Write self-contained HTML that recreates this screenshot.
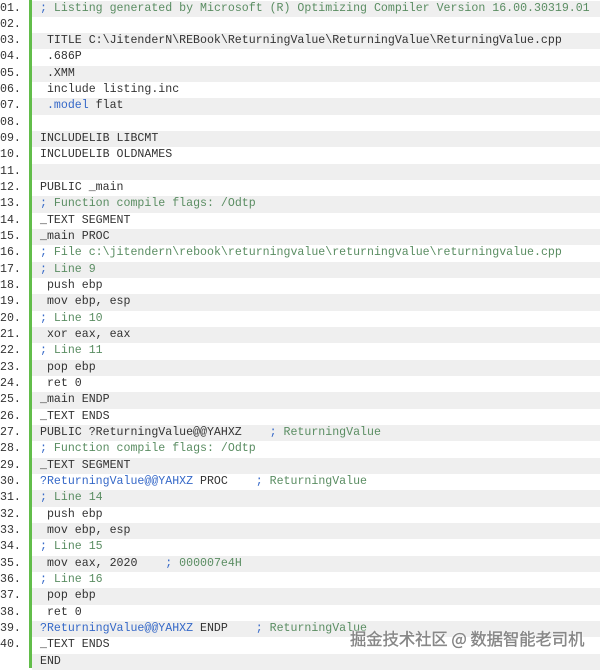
<!DOCTYPE html>
<html><head><meta charset="utf-8"><style>
body{margin:0;width:600px;height:668px;overflow:hidden;background:#fff;font-family:"Liberation Mono",monospace;font-size:11.6px;position:relative}
.nums{position:absolute;left:0;top:0.5px;width:29px;color:#333}
.bar{position:absolute;left:29px;top:0;width:2.5px;height:668px;background:#62bd4a}
.code{position:absolute;left:32px;top:0.5px;right:0;color:#333}
.r{height:16.33px;line-height:16.33px;white-space:pre}
.code .r{padding-left:8px}
.code .r:nth-child(odd){background:#efefef}
.c{color:#5a8d62}.s{color:#3568c8}.b{color:#3568c8}
.wm{position:absolute;left:350px;top:626px;font-family:"Noto Sans CJK SC",sans-serif;font-size:16.3px;color:#8a8a8a;white-space:nowrap;-webkit-text-stroke:0.3px #777;text-shadow:0 0 2px #fff,0 0 2px #fff}
</style></head><body>
<div class="nums">
<div class="r">01.</div><div class="r">02.</div><div class="r">03.</div><div class="r">04.</div><div class="r">05.</div><div class="r">06.</div><div class="r">07.</div><div class="r">08.</div><div class="r">09.</div><div class="r">10.</div><div class="r">11.</div><div class="r">12.</div><div class="r">13.</div><div class="r">14.</div><div class="r">15.</div><div class="r">16.</div><div class="r">17.</div><div class="r">18.</div><div class="r">19.</div><div class="r">20.</div><div class="r">21.</div><div class="r">22.</div><div class="r">23.</div><div class="r">24.</div><div class="r">25.</div><div class="r">26.</div><div class="r">27.</div><div class="r">28.</div><div class="r">29.</div><div class="r">30.</div><div class="r">31.</div><div class="r">32.</div><div class="r">33.</div><div class="r">34.</div><div class="r">35.</div><div class="r">36.</div><div class="r">37.</div><div class="r">38.</div><div class="r">39.</div><div class="r">40.</div>
</div>
<div class="bar"></div>
<div class="code">
<div class="r"><span class="s">;</span><span class="c"> Listing generated by Microsoft (R) Optimizing Compiler Version 16.00.30319.01</span></div>
<div class="r"> </div>
<div class="r"> TITLE C:\JitenderN\REBook\ReturningValue\ReturningValue\ReturningValue.cpp</div>
<div class="r"> .686P</div>
<div class="r"> .XMM</div>
<div class="r"> include listing.inc</div>
<div class="r"> <span class="b">.model</span> flat</div>
<div class="r"> </div>
<div class="r">INCLUDELIB LIBCMT</div>
<div class="r">INCLUDELIB OLDNAMES</div>
<div class="r"> </div>
<div class="r">PUBLIC _main</div>
<div class="r"><span class="s">;</span><span class="c"> Function compile flags: /Odtp</span></div>
<div class="r">_TEXT SEGMENT</div>
<div class="r">_main PROC</div>
<div class="r"><span class="s">;</span><span class="c"> File c:\jitendern\rebook\returningvalue\returningvalue\returningvalue.cpp</span></div>
<div class="r"><span class="s">;</span><span class="c"> Line 9</span></div>
<div class="r"> push ebp</div>
<div class="r"> mov ebp, esp</div>
<div class="r"><span class="s">;</span><span class="c"> Line 10</span></div>
<div class="r"> xor eax, eax</div>
<div class="r"><span class="s">;</span><span class="c"> Line 11</span></div>
<div class="r"> pop ebp</div>
<div class="r"> ret 0</div>
<div class="r">_main ENDP</div>
<div class="r">_TEXT ENDS</div>
<div class="r">PUBLIC ?ReturningValue@@YAHXZ    <span class="s">;</span><span class="c"> ReturningValue</span></div>
<div class="r"><span class="s">;</span><span class="c"> Function compile flags: /Odtp</span></div>
<div class="r">_TEXT SEGMENT</div>
<div class="r"><span class="b">?ReturningValue@@YAHXZ</span> PROC    <span class="s">;</span><span class="c"> ReturningValue</span></div>
<div class="r"><span class="s">;</span><span class="c"> Line 14</span></div>
<div class="r"> push ebp</div>
<div class="r"> mov ebp, esp</div>
<div class="r"><span class="s">;</span><span class="c"> Line 15</span></div>
<div class="r"> mov eax, 2020    <span class="s">;</span><span class="c"> 000007e4H</span></div>
<div class="r"><span class="s">;</span><span class="c"> Line 16</span></div>
<div class="r"> pop ebp</div>
<div class="r"> ret 0</div>
<div class="r"><span class="b">?ReturningValue@@YAHXZ</span> ENDP    <span class="s">;</span><span class="c"> ReturningValue</span></div>
<div class="r">_TEXT ENDS</div>
<div class="r">END</div>
</div>
<div class="wm">掘金技术社区 @ 数据智能老司机</div>
</body></html>
